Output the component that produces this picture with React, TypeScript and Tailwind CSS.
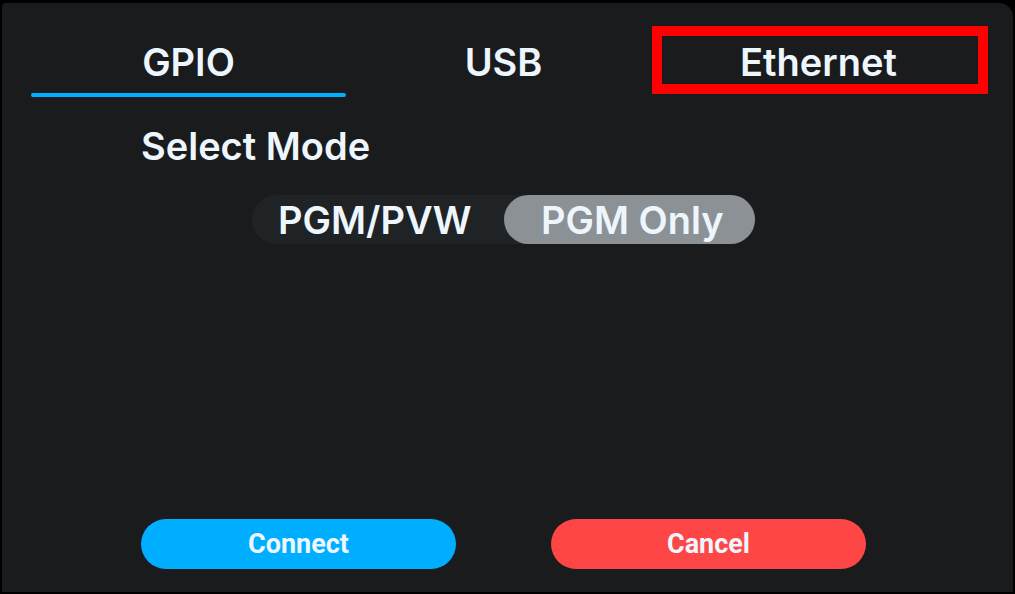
import React, { useState } from 'react';

const tabs = ['GPIO', 'USB', 'Ethernet'];
const modes = ['PGM/PVW', 'PGM Only'];

const App = () => {
  const [tab, setTab] = useState('GPIO');
  const [mode, setMode] = useState('PGM Only');

  return (
    <div
      className="w-[1015px] h-[594px] bg-black pt-[3px] pb-[2px] pl-[2px] pr-[2px]"
      style={{ fontFamily: 'Inter, "Noto Sans", sans-serif' }}
    >
      <div className="flex flex-col h-full bg-[#1a1b1d] rounded-tr-[14px] rounded-tl-[4px] text-[#eef6fd]">
        <div className="flex pt-[26px] pl-[29px]">
          {tabs.map(t => (
            <button
              key={t}
              type="button"
              onClick={() => setTab(t)}
              className="relative flex flex-col items-center w-[315px] h-[68px]"
            >
              <span className="flex-1 flex items-center text-[38px] font-semibold leading-none pt-[2px]">
                {t}
              </span>
              <span
                className={
                  tab === t
                    ? 'h-1 w-full rounded-full bg-[#00aeff]'
                    : 'h-1 w-full'
                }
              />
              {t === 'Ethernet' && (
                <span className="absolute -left-[9px] -right-[12px] -top-[3px] bottom-[3px] border-[10px] border-[#ff0000]" />
              )}
            </button>
          ))}
        </div>

        <p className="mt-[30px] ml-[139px] text-[38px] font-semibold leading-none">
          Select Mode
        </p>

        <div className="flex mt-[30px] ml-[250px] w-[503px] h-[49px] rounded-full bg-[#202326]">
          {modes.map(m => (
            <button
              key={m}
              type="button"
              onClick={() => setMode(m)}
              className={
                mode === m
                  ? 'flex-1 rounded-full bg-[#8c9196] text-[38px] font-semibold leading-none pl-[6px]'
                  : 'flex-1 rounded-full text-[38px] font-semibold leading-none pr-[6px]'
              }
            >
              {m}
            </button>
          ))}
        </div>

        <div
          className="flex gap-[95px] mt-auto mb-[23px] ml-[139px]"
          style={{ fontFamily: 'Roboto, "Liberation Sans", sans-serif' }}
        >
          <button
            type="button"
            className="w-[315px] h-[50px] rounded-full bg-[#00aeff] text-[27px] font-bold"
          >
            Connect
          </button>
          <button
            type="button"
            className="w-[315px] h-[50px] rounded-full bg-[#ff4646] text-[27px] font-bold"
          >
            Cancel
          </button>
        </div>
      </div>
    </div>
  );
};

export default App;
